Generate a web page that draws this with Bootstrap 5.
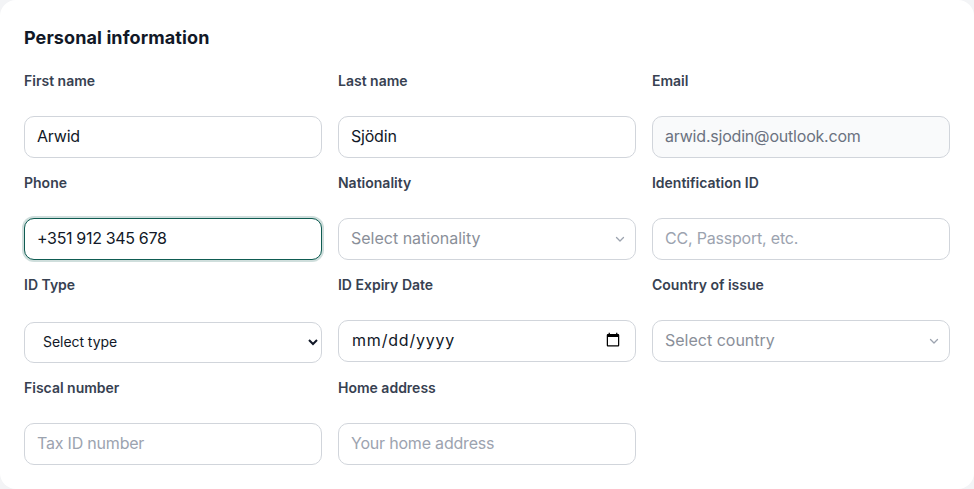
<!DOCTYPE html>
<html lang="en">
<head>
<meta charset="utf-8">
<title>Personal information</title>
<link href="https://cdn.jsdelivr.net/npm/bootstrap@5.3.0/dist/css/bootstrap.min.css" rel="stylesheet">
<style>
html, body { height: 100%; }
body { background: #f3f4f6; font-family: "Inter", "Liberation Sans", sans-serif; color: #111827; overflow: hidden; }
.pi-card { background: #fff; border-radius: 16px; height: 489px; padding: 24px; }
.pi-title { font-size: 18px; font-weight: 700; line-height: 27px; letter-spacing: .1px; margin-bottom: 19px; color: #111827; }
.pi-row { --bs-gutter-x: 16px; --bs-gutter-y: 0; }
.pi-field { height: 102px; }
.pi-field.pi-tall { height: 103px; }
.pi-label { display: block; font-size: 14px; font-weight: 600; line-height: 21px; color: #374151; margin-bottom: 25px; }
.pi-input.form-control { height: 42px; border: 1px solid #d1d5db; border-radius: 10px; padding: 7px 12px 9px; font-size: 16px; line-height: 24px; letter-spacing: -.2px; color: #111827; background-color: #fff; box-shadow: none; }
.pi-input.form-control::placeholder { color: #9ca3af; opacity: 1; }
.pi-input.form-control:disabled { background: #f9fafb; color: #6b7280; }
.pi-input.pi-focus.form-control { border-color: #0f5c52; box-shadow: 0 0 0 2px rgba(15, 92, 82, .2); letter-spacing: -.33px; }
select.pi-native.form-control { appearance: auto; -webkit-appearance: auto; height: 41px; padding-left: 14px; font-size: 14px; line-height: 21px; letter-spacing: -.05px; margin-top: 27px; }
input[type="date"].pi-input.form-control { padding-left: 13px; letter-spacing: .8px; }
.pi-combo { display: flex; align-items: center; justify-content: space-between; }
.pi-input.pi-combo.form-control { letter-spacing: 0; }
.pi-combo-text { color: #8a8f99; }
.pi-combo svg { flex: none; margin: 2px -5px 0 0; }
</style>
</head>
<body>
<div class="pi-card">
  <h2 class="pi-title">Personal information</h2>
  <div class="row pi-row">
    <div class="col-4 pi-field">
      <label class="pi-label" for="f1">First name</label>
      <input id="f1" class="form-control pi-input" value="Arwid">
    </div>
    <div class="col-4 pi-field">
      <label class="pi-label" for="f2">Last name</label>
      <input id="f2" class="form-control pi-input" value="Sjödin">
    </div>
    <div class="col-4 pi-field">
      <label class="pi-label" for="f3">Email</label>
      <input id="f3" class="form-control pi-input" value="arwid.sjodin@outlook.com" disabled>
    </div>
    <div class="col-4 pi-field">
      <label class="pi-label" for="f4">Phone</label>
      <input id="f4" class="form-control pi-input pi-focus" value="+351 912 345 678">
    </div>
    <div class="col-4 pi-field">
      <span class="pi-label">Nationality</span>
      <div class="form-control pi-input pi-combo" role="combobox" aria-expanded="false"><span class="pi-combo-text">Select nationality</span>
        <svg width="16" height="16" viewBox="0 0 16 16" fill="none" stroke="#9ca3af" stroke-width="1.3" stroke-linecap="round" stroke-linejoin="round" aria-hidden="true"><path d="M4.5 6.5 8 10l3.5-3.5"/></svg>
      </div>
    </div>
    <div class="col-4 pi-field">
      <label class="pi-label" for="f6">Identification ID</label>
      <input id="f6" class="form-control pi-input" placeholder="CC, Passport, etc.">
    </div>
    <div class="col-4 pi-field pi-tall">
      <label class="pi-label" for="f7">ID Type</label>
      <select id="f7" class="form-control pi-input pi-native"><option>Select type</option></select>
    </div>
    <div class="col-4 pi-field pi-tall">
      <label class="pi-label" for="f8">ID Expiry Date</label>
      <input id="f8" type="date" class="form-control pi-input">
    </div>
    <div class="col-4 pi-field pi-tall">
      <span class="pi-label">Country of issue</span>
      <div class="form-control pi-input pi-combo" role="combobox" aria-expanded="false"><span class="pi-combo-text">Select country</span>
        <svg width="16" height="16" viewBox="0 0 16 16" fill="none" stroke="#9ca3af" stroke-width="1.3" stroke-linecap="round" stroke-linejoin="round" aria-hidden="true"><path d="M4.5 6.5 8 10l3.5-3.5"/></svg>
      </div>
    </div>
    <div class="col-4 pi-field">
      <label class="pi-label" for="f10">Fiscal number</label>
      <input id="f10" class="form-control pi-input" placeholder="Tax ID number">
    </div>
    <div class="col-4 pi-field">
      <label class="pi-label" for="f11">Home address</label>
      <input id="f11" class="form-control pi-input" placeholder="Your home address">
    </div>
  </div>
</div>
<script src="https://cdn.jsdelivr.net/npm/bootstrap@5.3.0/dist/js/bootstrap.bundle.min.js"></script>
</body>
</html>
